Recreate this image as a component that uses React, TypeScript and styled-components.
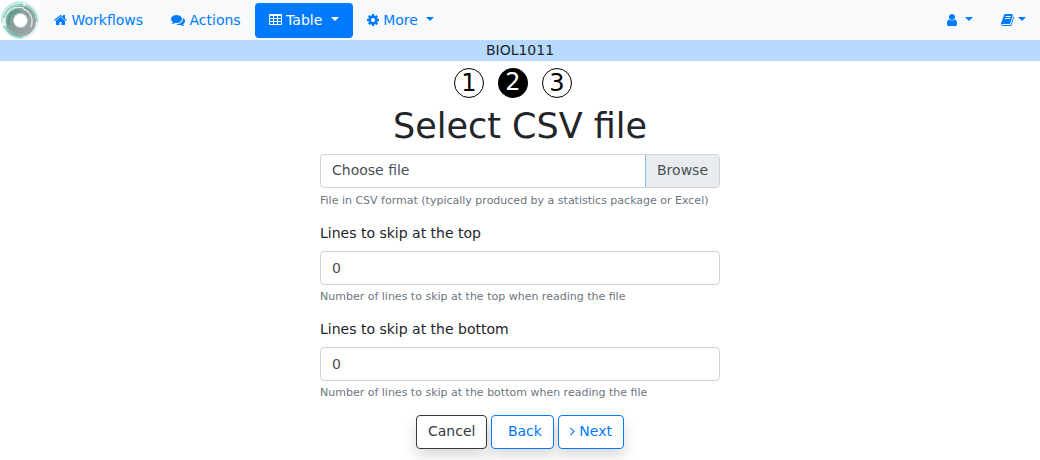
import React from "react";
import styled, { createGlobalStyle, css } from "styled-components";

const GlobalStyle = createGlobalStyle`
  *, *::before, *::after { box-sizing: border-box; }
  body {
    margin: 0;
    min-height: 100vh;
    background: #fff;
    color: #212529;
    font-family: "DejaVu Sans", sans-serif;
    font-size: 14px;
    line-height: 21px;
  }
`;

const Navbar = styled.nav`
  display: flex;
  align-items: flex-start;
  height: 40px;
  background: #f8f9fa;
`;

const Brand = styled.a`
  display: flex;
  width: 40px;
  height: 40px;
  background: #fff;
`;

const NavList = styled.ul<{ $end?: boolean }>`
  display: flex;
  margin: 3px 0 0;
  margin-left: ${(p) => (p.$end ? "auto" : "0")};
  padding: 0;
  list-style: none;
`;

const navItem = css<{ $active?: boolean }>`
  display: block;
  margin: 0;
  padding: 7px 14px;
  border: 0;
  border-radius: 4px;
  background: ${(p) => (p.$active ? "#007bff" : "transparent")};
  color: ${(p) => (p.$active ? "#fff" : "#007bff")};
  font: inherit;
  text-decoration: none;
  white-space: pre;
  cursor: pointer;
`;

const NavLink = styled.a`${navItem}`;
const NavButton = styled.button<{ $active?: boolean }>`${navItem}`;

const Caret = styled.span`
  display: inline-block;
  margin-left: 4px;
  vertical-align: 4px;
  border-top: 4px solid;
  border-right: 4px solid transparent;
  border-left: 4px solid transparent;
`;

const Glyph = styled.svg`
  display: inline-block;
  height: 14px;
  vertical-align: -2px;
  fill: currentColor;
`;

const ContextBar = styled.div`
  background: #b8daff;
  text-align: center;
`;

const Page = styled.main`
  display: flex;
  flex-direction: column;
  align-items: center;
  padding: 7px 14px 11px;
`;

const Steps = styled.ol`
  display: flex;
  margin: 0;
  padding: 0;
  list-style: none;
`;

const Step = styled.li<{ $current?: boolean }>`
  width: 30px;
  height: 30px;
  margin-right: 14px;
  border: ${(p) => (p.$current ? "0" : "1px solid #000")};
  border-radius: 50%;
  background: ${(p) => (p.$current ? "#000" : "#fff")};
  color: ${(p) => (p.$current ? "#fff" : "#000")};
  font-size: 24px;
  line-height: 28px;
  text-align: center;
`;

const Title = styled.h1`
  margin: 7px 0;
  font-size: 35px;
  font-weight: 500;
  line-height: 42px;
  text-align: center;
`;

const Form = styled.form`
  width: 100%;
  max-width: 400px;
`;

const Group = styled.div`
  margin-bottom: 14px;
`;

const Label = styled.label`
  display: block;
  margin-bottom: 7px;
`;

const field = css`
  width: 100%;
  height: 34px;
  border: 1px solid #ced4da;
  border-radius: 4px;
  background: #fff;
  color: #495057;
`;

const TextInput = styled.input`
  ${field}
  display: block;
  padding: 5px 11px;
  font: inherit;
  appearance: textfield;
  &::-webkit-inner-spin-button { appearance: none; }
`;

const FilePicker = styled.div`
  position: relative;
  padding-bottom: 1px;
`;

const FileInput = styled.input`
  position: absolute;
  inset: 0;
  width: 100%;
  opacity: 0;
`;

const FileLabel = styled.label`
  ${field}
  display: flex;
  justify-content: space-between;
  padding-left: 11px;
  line-height: 30px;
  overflow: hidden;
`;

const Browse = styled.span`
  padding: 0 11px;
  border-left: 1px solid #80bdff;
  background: #e9ecef;
`;

const Help = styled.small`
  display: block;
  margin-top: 3px;
  color: #6c757d;
  font-size: 11px;
  line-height: 17px;
`;

const Actions = styled.div`
  display: flex;
  justify-content: center;
  gap: 4px;
`;

const Button = styled.button<{ $dark?: boolean }>`
  height: 34px;
  padding: 0 11px 2px;
  border: 1px solid;
  border-radius: 4px;
  border-color: ${(p) => (p.$dark ? "#343a40" : "#007bff")};
  background: #fff;
  color: ${(p) => (p.$dark ? "#343a40" : "#007bff")};
  box-shadow: 0 7px 14px rgba(0, 0, 0, 0.15);
  font: inherit;
  white-space: pre;
  cursor: pointer;
`;

const icons = {
  home: { x: 64, w: 13, d: "M1472 992v480q0 26-19 45t-45 19h-384v-384h-256v384h-384q-26 0-45-19t-19-45v-480q0-1 .5-3t.5-3l575-474 575 474q1 2 1 6zm223-69l-62 74q-8 9-21 11h-3q-13 0-21-7l-692-577-692 577q-12 8-24 7-13-2-21-11l-62-74q-8-10-7-23.5t11-21.5l719-599q32-26 76-26t76 26l244 204v-195q0-14 9-23t23-9h192q14 0 23 9t9 23v408l219 182q10 8 11 21.5t-7 23.5z" },
  comments: { x: 0, w: 14, d: "M1408 768q0 139-94 257t-256.5 186.5-353.5 68.5q-86 0-176-16-124 88-278 128-36 9-86 16h-3q-11 0-20.5-8t-11.5-21q-1-3-1-6.5t.5-6.5 2-6l2.5-5 3.5-5.5 4-5 4.5-5 4-4.5q5-6 23-25t26-29.5 22.5-29 25-38.5 20.5-44q-124-72-195-177t-71-224q0-139 94-257t256.5-186.5 353.5-68.5 353.5 68.5 256.5 186.5 94 257zm384 256q0 120-71 224.5t-195 176.5q10 24 20.5 44t25 38.5 22.5 29 26 29.5 23 25q1 1 4 4.5t4.5 5 4 5 3.5 5.5l2.5 5 2 6 .5 6.5-1 6.5q-3 14-13 22t-22 7q-50-7-86-16-154-40-278-128-90 16-176 16-271 0-472-132 58 4 88 4 161 0 309-45t264-129q125-92 192-212t67-254q0-77-23-152 129 71 204 178t75 230z" },
  table: { x: 64, w: 13, d: "M576 1376v-192q0-14-9-23t-23-9h-320q-14 0-23 9t-9 23v192q0 14 9 23t23 9h320q14 0 23-9t9-23zm0-384v-192q0-14-9-23t-23-9h-320q-14 0-23 9t-9 23v192q0 14 9 23t23 9h320q14 0 23-9t9-23zm512 384v-192q0-14-9-23t-23-9h-320q-14 0-23 9t-9 23v192q0 14 9 23t23 9h320q14 0 23-9t9-23zm-512-768v-192q0-14-9-23t-23-9h-320q-14 0-23 9t-9 23v192q0 14 9 23t23 9h320q14 0 23-9t9-23zm512 384v-192q0-14-9-23t-23-9h-320q-14 0-23 9t-9 23v192q0 14 9 23t23 9h320q14 0 23-9t9-23zm512 384v-192q0-14-9-23t-23-9h-320q-14 0-23 9t-9 23v192q0 14 9 23t23 9h320q14 0 23-9t9-23zm-512-768v-192q0-14-9-23t-23-9h-320q-14 0-23 9t-9 23v192q0 14 9 23t23 9h320q14 0 23-9t9-23zm512 384v-192q0-14-9-23t-23-9h-320q-14 0-23 9t-9 23v192q0 14 9 23t23 9h320q14 0 23-9t9-23zm0-384v-192q0-14-9-23t-23-9h-320q-14 0-23 9t-9 23v192q0 14 9 23t23 9h320q14 0 23-9t9-23zm128-320v1088q0 66-47 113t-113 47h-1344q-66 0-113-47t-47-113v-1088q0-66 47-113t113-47h1344q66 0 113 47t47 113z" },
  cog: { x: 128, w: 12, d: "M1152 896q0-106-75-181t-181-75-181 75-75 181 75 181 181 75 181-75 75-181zm512-109v222q0 12-8 23t-20 13l-185 28q-19 54-39 91 35 50 107 138 10 12 10 25t-9 23q-27 37-99 108t-94 71q-12 0-26-9l-138-108q-44 23-91 38-16 136-29 186-7 28-36 28h-222q-14 0-24.5-8.5t-11.5-21.5l-28-184q-49-16-90-37l-141 107q-10 9-25 9-14 0-25-11-126-114-165-168-7-10-7-23 0-12 8-23 15-21 51-66.5t54-70.5q-27-50-41-99l-183-27q-13-2-21-12.5t-8-23.5v-222q0-12 8-23t19-13l186-28q14-46 39-92-40-57-107-138-10-12-10-24 0-10 9-23 26-36 98.5-107.5t94.5-71.5q13 0 26 10l138 107q44-23 91-38 16-136 29-186 7-28 36-28h222q14 0 24.5 8.5t11.5 21.5l28 184q49 16 90 37l142-107q9-9 24-9 13 0 25 10 129 119 165 170 7 8 7 22 0 12-8 23-15 21-51 66.5t-54 70.5q26 50 41 98l183 28q13 2 21 12.5t8 23.5z" },
  user: { x: 256, w: 10, d: "M1536 1399q0 109-62.5 187t-150.5 78h-854q-88 0-150.5-78t-62.5-187q0-85 8.5-160.5t31.5-152 58.5-131 94-89 134.5-34.5q131 128 313 128t313-128q76 0 134.5 34.5t94 89 58.5 131 31.5 152 8.5 160.5zm-256-887q0 159-112.5 271.5t-271.5 112.5-271.5-112.5-112.5-271.5 112.5-271.5 271.5-112.5 271.5 112.5 112.5 271.5z" },
  book: { x: 64, w: 13, d: "M1703 478q40 57 18 129l-275 906q-19 64-76.5 107.5t-122.5 43.5h-923q-77 0-148.5-53.5t-99.5-131.5q-24-67-2-127 0-4 3-27t4-37q1-8-3-21.5t-3-19.5q2-11 8-21t16.5-23.5 16.5-23.5q23-38 45-91.5t30-91.5q3-10 .5-30t-.5-28q3-11 17-28t17-23q21-36 42-92t25-90q1-9-2.5-32t.5-28q4-13 22-30.5t22-22.5q19-26 42.5-84.5t27.5-96.5q1-8-3-25.5t-2-26.5q2-8 9-18t18-23 17-21q8-12 16.5-30.5t15-35 16-36 19.5-32 26.5-23.5 36-11.5 47.5 5.5l-1 3q38-9 51-9h761q74 0 114 56t18 130l-274 906q-36 119-71.5 153.5t-128.5 34.5h-869q-27 0-38 15-11 16-1 43 24 70 144 70h923q29 0 56-15.5t35-41.5l300-987q7-22 5-57 38 15 59 43zm-1064 2q-4 13 2 22.5t20 9.5h608q13 0 25.5-9.5t16.5-22.5l21-64q4-13-2-22.5t-20-9.5h-608q-13 0-25.5 9.5t-16.5 22.5zm-83 256q-4 13 2 22.5t20 9.5h608q13 0 25.5-9.5t16.5-22.5l21-64q4-13-2-22.5t-20-9.5h-608q-13 0-25.5 9.5t-16.5 22.5z" },
  angleRight: { x: 576, w: 5, d: "M1171 960q0 13-10 23l-466 466q-10 10-23 10t-23-10l-50-50q-10-10-10-23t10-23l393-393-393-393q-10-10-10-23t10-23l50-50q10-10 23-10t23 10l466 466q10 10 10 23z" },
};

function Icon({ name }: { name: keyof typeof icons }) {
  const { x, w, d } = icons[name];
  return (
    <Glyph width={w} viewBox={`${x} 0 ${w * 128} 1792`} aria-hidden="true">
      <path d={d} />
    </Glyph>
  );
}

function Logo() {
  return (
    <svg width="40" height="40" viewBox="0 0 40 40" fill="none" aria-hidden="true">
      <defs>
        <linearGradient id="ring" x1="0" y1="0" x2="1" y2="1">
          <stop offset="0" stopColor="#6fa79d" />
          <stop offset="0.5" stopColor="#8d9c9c" />
          <stop offset="1" stopColor="#aaa9b0" />
        </linearGradient>
      </defs>
      <circle cx="20" cy="20" r="17.5" stroke="#dff4f0" strokeWidth="3" />
      <circle cx="20.5" cy="21" r="15.5" fill="url(#ring)" />
      <path d="M2 22C1 10 11 1 23 3" stroke="#b5e6dc" strokeWidth="1.5" />
      <path d="M4 18C6 8 14 4 23 5" stroke="#7cc9b8" strokeWidth="1.5" />
      <path d="M6 26C2 14 12 5 24 8" stroke="#d5ebe7" strokeWidth="1.5" />
      <path d="M25 5C33 8 37 14 37 22" stroke="#8ed5c5" strokeWidth="1.5" />
      <path d="M23 9C30 11 34 18 31 27" stroke="#d0e4e1" strokeWidth="1.5" />
      <path d="M9 25C7 16 12 11 20 11" stroke="#589a8e" strokeWidth="2" />
      <path d="M4 26C8 34 14 38 23 37" stroke="#6dd0ba" strokeWidth="1.5" />
      <path d="M7 28C12 34 20 36 28 33" stroke="#8fb4af" strokeWidth="1.5" />
      <circle cx="20.5" cy="20.5" r="7.5" fill="#c5d1d1" />
      <circle cx="20.5" cy="20.5" r="6.5" fill="#fff" />
    </svg>
  );
}

function NumberField({ id, label, help }: { id: string; label: string; help: string }) {
  return (
    <Group>
      <Label htmlFor={id}>{label}</Label>
      <TextInput id={id} type="number" min={0} defaultValue={0} aria-describedby={`${id}-help`} />
      <Help id={`${id}-help`}>{help}</Help>
    </Group>
  );
}

export default function App() {
  return (
    <>
      <GlobalStyle />
      <Navbar>
        <Brand href="#" aria-label="Home"><Logo /></Brand>
        <NavList>
          <li><NavLink href="#workflows"><Icon name="home" /> Workflows</NavLink></li>
          <li><NavLink href="#actions"><Icon name="comments" /> Actions</NavLink></li>
          <li><NavButton type="button" $active><Icon name="table" />{" Table "}<Caret /></NavButton></li>
          <li><NavButton type="button"><Icon name="cog" />{" More "}<Caret /></NavButton></li>
        </NavList>
        <NavList $end>
          <li><NavButton type="button" aria-label="Account"><Icon name="user" />{" "}<Caret /></NavButton></li>
          <li><NavButton type="button" aria-label="Documentation"><Icon name="book" /><Caret /></NavButton></li>
        </NavList>
      </Navbar>
      <ContextBar>BIOL1011</ContextBar>
      <Page>
        <Steps>
          <Step>1</Step>
          <Step $current aria-current="step">2</Step>
          <Step>3</Step>
        </Steps>
        <Title>Select CSV file</Title>
        <Form onSubmit={(e) => e.preventDefault()}>
          <Group>
            <FilePicker>
              <FileInput id="csv-file" type="file" accept=".csv" aria-describedby="csv-file-help" />
              <FileLabel htmlFor="csv-file">Choose file<Browse>Browse</Browse></FileLabel>
            </FilePicker>
            <Help id="csv-file-help">File in CSV format (typically produced by a statistics package or Excel)</Help>
          </Group>
          <NumberField id="skip-top" label="Lines to skip at the top" help="Number of lines to skip at the top when reading the file" />
          <NumberField id="skip-bottom" label="Lines to skip at the bottom" help="Number of lines to skip at the bottom when reading the file" />
          <Actions>
            <Button type="button" $dark>Cancel</Button>
            <Button type="button">{" Back"}</Button>
            <Button type="submit"><Icon name="angleRight" /> Next</Button>
          </Actions>
        </Form>
      </Page>
    </>
  );
}
